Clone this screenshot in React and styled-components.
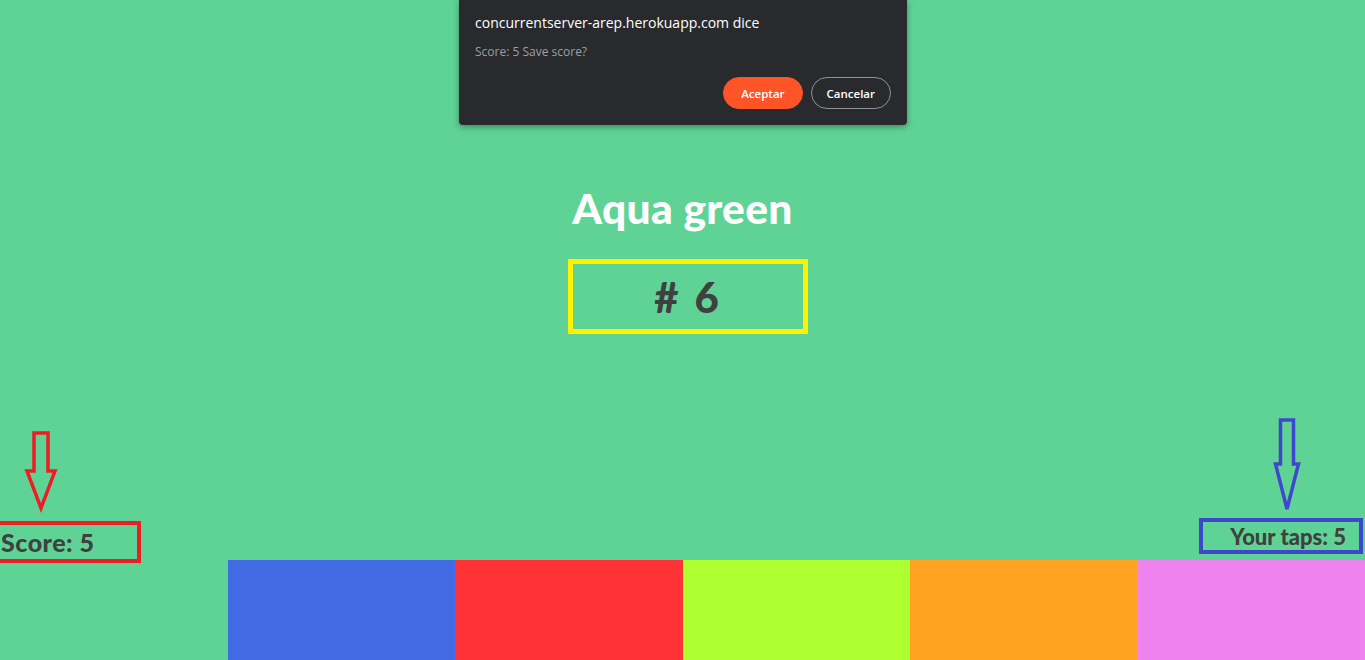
import React from 'react';
import styled, { createGlobalStyle } from 'styled-components';

const GlobalStyle = createGlobalStyle`
  html, body {
    margin: 0;
    padding: 0;
    background: #5fd395;
    overflow: hidden;
  }
`;

const tiles = ['#5fd395', '#416ae3', '#ff3336', '#adff2f', '#ffa321', '#ee82ee'];

const App = () => (
  <>
    <GlobalStyle />
    <Page>
      <Dialog>
        <DialogTitle>concurrentserver-arep.herokuapp.com dice</DialogTitle>
        <DialogMessage>Score: 5 Save score?</DialogMessage>
        <DialogActions>
          <DialogButton primary>Aceptar</DialogButton>
          <DialogButton>Cancelar</DialogButton>
        </DialogActions>
      </Dialog>

      <Center>
        <ColorName>Aqua green</ColorName>
        <TargetBox># 6</TargetBox>
      </Center>

      <StatsRow>
        <StatBox color="#ee1c25" side="left">
          <Arrow color="#ee1c25" style={{ left: 24, top: -94 }} />
          <ScoreText>Score: 5</ScoreText>
        </StatBox>
        <StatBox color="#3f48cc" side="right">
          <Arrow color="#3f48cc" narrow style={{ left: 70, top: -104 }} />
          <TapsText>Your taps: 5</TapsText>
        </StatBox>
      </StatsRow>

      <Tiles>
        {tiles.map((c) => (
          <Tile key={c} color={c} />
        ))}
      </Tiles>
    </Page>
  </>
);

const Arrow = ({ color, narrow, style }) => (
  <ArrowSvg
    style={style}
    width={narrow ? 28 : 36}
    height={narrow ? 94 : 80}
    viewBox={narrow ? '0 0 28 94' : '0 0 36 80'}
  >
    {narrow ? (
      <path
        d="M7.5 2 H20.5 V46 H25.5 L14 91 L2.5 46 H7.5 Z"
        fill="none"
        stroke={color}
        strokeWidth="3.5"
      />
    ) : (
      <path
        d="M10 2 H24 V40 H31 L17 77 L3 40 H10 Z"
        fill="none"
        stroke={color}
        strokeWidth="3.5"
      />
    )}
  </ArrowSvg>
);

export default App;

const Page = styled.div`
  position: relative;
  height: 660px;
  display: flex;
  flex-direction: column;
  font-family: Lato, 'Noto Sans', sans-serif;
`;

const Dialog = styled.div`
  position: absolute;
  top: 0;
  left: 459px;
  width: 448px;
  height: 125px;
  box-sizing: border-box;
  padding: 14px 16px 0 16px;
  background: #292a2d;
  border-radius: 0 0 4px 4px;
  box-shadow: 0 2px 6px rgba(0, 0, 0, 0.35);
  font-family: 'Open Sans', 'Noto Sans', sans-serif;
  z-index: 2;
`;

const DialogTitle = styled.div`
  color: #ffffff;
  font-size: 14px;
  line-height: 18px;
`;

const DialogMessage = styled.div`
  margin-top: 12px;
  color: #9aa0a6;
  font-size: 12px;
  line-height: 15px;
`;

const DialogActions = styled.div`
  display: flex;
  justify-content: flex-end;
  gap: 8px;
  margin-top: 18px;
`;

const DialogButton = styled.button`
  height: 32px;
  padding: 0 ${(p) => (p.primary ? '17px' : '15px')};
  min-width: 79px;
  border-radius: 16px;
  border: 1px solid ${(p) => (p.primary ? '#ff5328' : '#8e9196')};
  background: ${(p) => (p.primary ? '#ff5328' : 'transparent')};
  color: #ffffff;
  font-family: 'Open Sans', 'Noto Sans', sans-serif;
  font-size: 11.5px;
  font-weight: 600;
`;

const Center = styled.div`
  display: flex;
  flex-direction: column;
  align-items: center;
  padding-top: 182px;
  flex: 1;
`;

const ColorName = styled.h1`
  margin: 0;
  color: #ffffff;
  font-family: Lato, sans-serif;
  font-weight: 900;
  font-size: 42.5px;
  line-height: 52px;
  letter-spacing: 0.3px;
`;

const TargetBox = styled.div`
  margin-top: 25px;
  margin-left: 11px;
  width: 240px;
  height: 75px;
  box-sizing: border-box;
  border: 5px solid #fff200;
  display: flex;
  align-items: center;
  justify-content: center;
  color: #404040;
  font-family: Lato, sans-serif;
  font-weight: 900;
  font-size: 42px;
  letter-spacing: 3px;
`;

const StatsRow = styled.div`
  display: flex;
  justify-content: space-between;
  align-items: flex-end;
  height: 44px;
`;

const StatBox = styled.div`
  position: relative;
  box-sizing: border-box;
  border: 4px solid ${(p) => p.color};
  display: flex;
  align-items: center;
  ${(p) =>
    p.side === 'left'
      ? `
    width: 145px;
    height: 42px;
    margin-left: -4px;
    margin-bottom: -3px;
  `
      : `
    width: 164px;
    height: 36px;
    margin-right: 2px;
    margin-bottom: 6px;
    justify-content: flex-end;
    padding-right: 13px;
  `}
`;

const ArrowSvg = styled.svg`
  position: absolute;
  overflow: visible;
`;

const ScoreText = styled.span`
  padding-left: 1px;
  color: #404040;
  font-weight: 900;
  font-size: 25px;
  letter-spacing: 0.5px;
`;

const TapsText = styled.span`
  color: #404040;
  font-weight: 900;
  font-size: 22px;
`;

const Tiles = styled.div`
  display: grid;
  grid-template-columns: repeat(6, 1fr);
  height: 100px;
`;

const Tile = styled.div`
  background: ${(p) => p.color};
`;
